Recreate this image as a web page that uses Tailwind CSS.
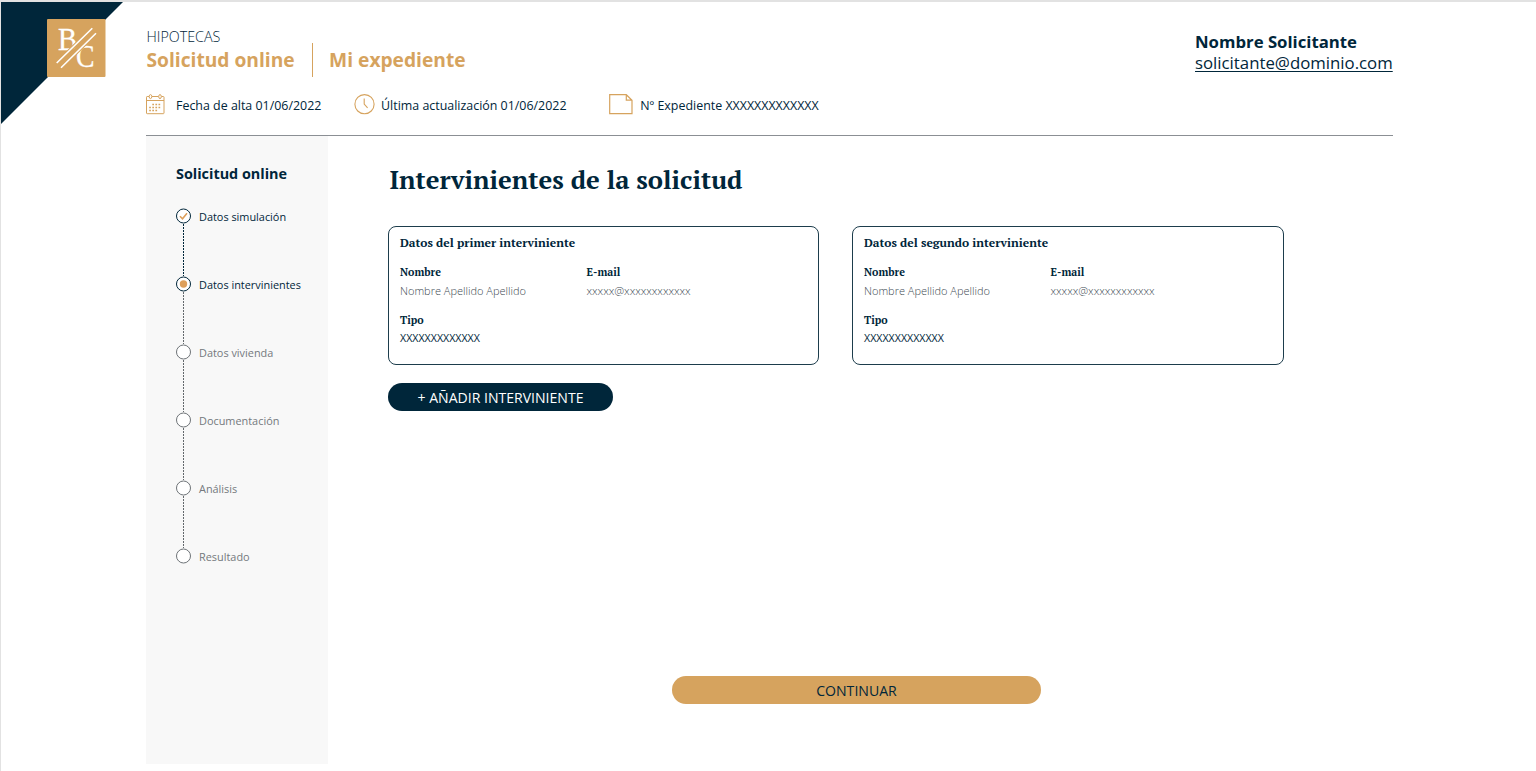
<!DOCTYPE html>
<html lang="es">
<head>
<meta charset="utf-8">
<title>Solicitud online</title>
<script src="https://cdn.jsdelivr.net/npm/@tailwindcss/browser@4"></script>
</head>
<body class="font-['Open_Sans','Noto_Sans',sans-serif] text-[#00263a] bg-white">
<div class="relative w-[1536px] h-[771px] overflow-hidden border-t-2 border-l border-[#e2e2e2] pl-[145px]">
  <!-- corner and logo -->
  <svg class="absolute left-0 top-0" width="122" height="122" viewBox="1 2 122 122">
    <path d="M1 2H123L1 124Z" fill="#00263a"/>
    <rect x="47" y="19" width="58.5" height="58" rx="1" fill="#d6a35e"/>
    <g fill="#fff" font-family="'Liberation Serif',serif" stroke="#fff" stroke-width=".3">
      <text x="58" y="50" font-size="32" textLength="19" lengthAdjust="spacingAndGlyphs">B</text>
      <text x="76" y="66.500" font-size="32" textLength="18.500" lengthAdjust="spacingAndGlyphs">C</text>
    </g>
    <path d="M56.700 63L92.300 28.300M61 67.700L96 33.200" stroke="#d6a35e" stroke-width="3.600"/>
    <path d="M56.700 63L92.300 28.300M61 67.700L96 33.200" stroke="#fff" stroke-width="1.600"/>
  </svg>

  <header class="w-[1247px] h-[134px] border-b border-[#8b8f94] flex justify-between">
    <div class="pt-[28px]">
      <p class="text-[14.300px] leading-[14px] font-light pl-[0.500px]">HIPOTECAS</p>
      <nav class="-mt-px flex h-[34px] items-center text-[19.200px] leading-6 font-bold text-[#d6a35e]">
        <a class="pl-[0.500px]">Solicitud online</a>
        <span class="w-px h-[34px] bg-[#d6a35e] ml-[17.500px] mr-4"></span>
        <a>Mi expediente</a>
      </nav>
      <div class="flex items-start pt-[17px] text-[12.430px] leading-6">
        <svg class="shrink-0" width="20" height="21" viewBox="0 0 20 21" fill="none" stroke="#d6a35e" stroke-width="1">
          <path d="M3 2.500H1.200Q.500 2.500 .500 3.200V19Q.500 19.700 1.200 19.700H17.300Q18 19.700 18 19V3.200Q18 2.500 17.300 2.500H15.500M6 2.500H12.500M.500 6.500H18"/>
          <ellipse cx="4.500" cy="2.600" rx="1.300" ry="2"/><ellipse cx="14" cy="2.600" rx="1.300" ry="2"/>
          <path d="M6.300 10.500H15.500M3.200 13.500H15.500M3.200 16.500H12.400" stroke-width="1.700" stroke-dasharray="1.700 1.400"/>
        </svg>
        <span class="ml-[10px]">Fecha de alta 01/06/2022</span>
        <svg class="shrink-0 ml-[32.600px]" width="21" height="21" viewBox="0 0 21 21" fill="none" stroke="#d6a35e" stroke-width="1.100">
          <circle cx="10.500" cy="10.200" r="9.600"/><path d="M10.200 4.500V10L13.600 13.800"/>
        </svg>
        <span class="ml-[6px]">Última actualización 01/06/2022</span>
        <svg class="shrink-0 ml-[42.400px]" width="24" height="21" viewBox="0 0 24 21" fill="none" stroke="#d6a35e" stroke-width="1.200">
          <path d="M.700 .700H17.300L23 6.200V19.600H.700ZM17.300 .700V6.200H23"/>
        </svg>
        <span class="ml-[7.300px]">Nº Expediente XXXXXXXXXXXXX</span>
      </div>
    </div>
    <div class="w-[198px] pt-[29px]">
      <p class="text-[16.750px] leading-[21px] font-bold">Nombre Solicitante</p>
      <a class="block text-[16.800px] leading-[21px] underline decoration-1 underline-offset-2 whitespace-nowrap">solicitante@dominio.com</a>
    </div>
  </header>

  <div class="flex">
    <aside class="w-[182px] h-[628px] bg-[#f8f8f8] pl-[30px] pt-[28px]">
      <h2 class="text-[14.400px] leading-5 font-bold">Solicitud online</h2>
      <ol class="mt-[24px] text-[10.900px] leading-[17px]">
        <li class="flex h-[68px] gap-2">
          <span class="flex flex-col items-center w-[15px]">
            <svg class="shrink-0" width="15" height="16" viewBox="0 0 15 16" fill="none"><circle cx="7.500" cy="8" r="7" stroke="#00263a" fill="#fff"/><path d="M4 8.200L6.500 10.700L11 5.200" stroke="#dd9f5b" stroke-width="1.600"/></svg>
            <svg class="shrink-0" width="1" height="52"><path d="M.500 0V52" stroke="#00263a" stroke-dasharray="2 1"/></svg>
          </span>
          <span>Datos simulación</span>
        </li>
        <li class="flex h-[68px] gap-2">
          <span class="flex flex-col items-center w-[15px]">
            <svg class="shrink-0" width="15" height="16" viewBox="0 0 15 16" fill="none"><circle cx="7.500" cy="8" r="7" stroke="#00263a" fill="#fff"/><circle cx="7.500" cy="8" r="3.700" fill="#dd9f5b"/></svg>
            <svg class="shrink-0" width="1" height="52"><path d="M.500 0V52" stroke="#63686c" stroke-dasharray="2 1"/></svg>
          </span>
          <span>Datos intervinientes</span>
        </li>
        <li class="flex h-[68px] gap-2 text-[#74797d]">
          <span class="flex flex-col items-center w-[15px]">
            <svg class="shrink-0" width="15" height="16" viewBox="0 0 15 16"><circle cx="7.500" cy="8" r="7" stroke="#6e7377" fill="#fff"/></svg>
            <svg class="shrink-0" width="1" height="52"><path d="M.500 0V52" stroke="#63686c" stroke-dasharray="2 1"/></svg>
          </span>
          <span>Datos vivienda</span>
        </li>
        <li class="flex h-[68px] gap-2 text-[#74797d]">
          <span class="flex flex-col items-center w-[15px]">
            <svg class="shrink-0" width="15" height="16" viewBox="0 0 15 16"><circle cx="7.500" cy="8" r="7" stroke="#6e7377" fill="#fff"/></svg>
            <svg class="shrink-0" width="1" height="52"><path d="M.500 0V52" stroke="#63686c" stroke-dasharray="2 1"/></svg>
          </span>
          <span>Documentación</span>
        </li>
        <li class="flex h-[68px] gap-2 text-[#74797d]">
          <span class="flex flex-col items-center w-[15px]">
            <svg class="shrink-0" width="15" height="16" viewBox="0 0 15 16"><circle cx="7.500" cy="8" r="7" stroke="#6e7377" fill="#fff"/></svg>
            <svg class="shrink-0" width="1" height="52"><path d="M.500 0V52" stroke="#63686c" stroke-dasharray="2 1"/></svg>
          </span>
          <span>Análisis</span>
        </li>
        <li class="flex gap-2 text-[#74797d]">
          <svg class="shrink-0" width="15" height="16" viewBox="0 0 15 16"><circle cx="7.500" cy="8" r="7" stroke="#6e7377" fill="#fff"/></svg>
          <span>Resultado</span>
        </li>
      </ol>
    </aside>

    <main class="w-[937px] pl-[60px] pt-[25px] h-[635px] flex flex-col">
      <h1 class="pl-[1.500px] font-['PT_Serif','Liberation_Serif',serif] text-[25.600px] leading-9 font-bold">Intervinientes de la solicitud</h1>
      <div class="mt-[29px] flex gap-[33px] w-[896px]">
        <section class="w-[431px] h-[139px] shrink-0 rounded-lg border border-[#1d3d4c] px-[11px] pt-[7px]">
          <h3 class="font-['PT_Serif','Liberation_Serif',serif] text-[12px] leading-[18px] font-bold">Datos del primer interviniente</h3>
          <dl class="mt-[11px] grid grid-cols-[186.500px_1fr] gap-y-[11px] text-[11px] leading-[18px]">
            <div>
              <dt class="font-['PT_Serif','Liberation_Serif',serif] text-[10.700px] font-bold">Nombre</dt>
              <dd class="mt-[1px] font-light text-[#404a53]">Nombre Apellido Apellido</dd>
            </div>
            <div>
              <dt class="font-['PT_Serif','Liberation_Serif',serif] text-[10.700px] font-bold">E-mail</dt>
              <dd class="mt-[1px] text-[11.150px] font-light text-[#404a53]">xxxxx@xxxxxxxxxxxx</dd>
            </div>
            <div>
              <dt class="font-['PT_Serif','Liberation_Serif',serif] text-[10.700px] font-bold">Tipo</dt>
              <dd class="text-[10.650px]">XXXXXXXXXXXXX</dd>
            </div>
          </dl>
        </section>
        <section class="w-[432px] h-[139px] shrink-0 rounded-lg border border-[#1d3d4c] px-[11px] pt-[7px]">
          <h3 class="font-['PT_Serif','Liberation_Serif',serif] text-[12px] leading-[18px] font-bold">Datos del segundo interviniente</h3>
          <dl class="mt-[11px] grid grid-cols-[186.500px_1fr] gap-y-[11px] text-[11px] leading-[18px]">
            <div>
              <dt class="font-['PT_Serif','Liberation_Serif',serif] text-[10.700px] font-bold">Nombre</dt>
              <dd class="mt-[1px] font-light text-[#404a53]">Nombre Apellido Apellido</dd>
            </div>
            <div>
              <dt class="font-['PT_Serif','Liberation_Serif',serif] text-[10.700px] font-bold">E-mail</dt>
              <dd class="mt-[1px] text-[11.150px] font-light text-[#404a53]">xxxxx@xxxxxxxxxxxx</dd>
            </div>
            <div>
              <dt class="font-['PT_Serif','Liberation_Serif',serif] text-[10.700px] font-bold">Tipo</dt>
              <dd class="text-[10.650px]">XXXXXXXXXXXXX</dd>
            </div>
          </dl>
        </section>
      </div>
      <button class="mt-[18px] w-[225px] h-7 rounded-full bg-[#00263a] text-white text-[14.050px] leading-[26px] pt-[2px]">+ AÑADIR INTERVINIENTE</button>
      <button class="mt-[265px] ml-[284px] w-[369px] h-7 rounded-full bg-[#d6a35e] text-[14.100px] leading-[26px] pt-[2px]">CONTINUAR</button>
    </main>
  </div>
</div>
</body>
</html>
